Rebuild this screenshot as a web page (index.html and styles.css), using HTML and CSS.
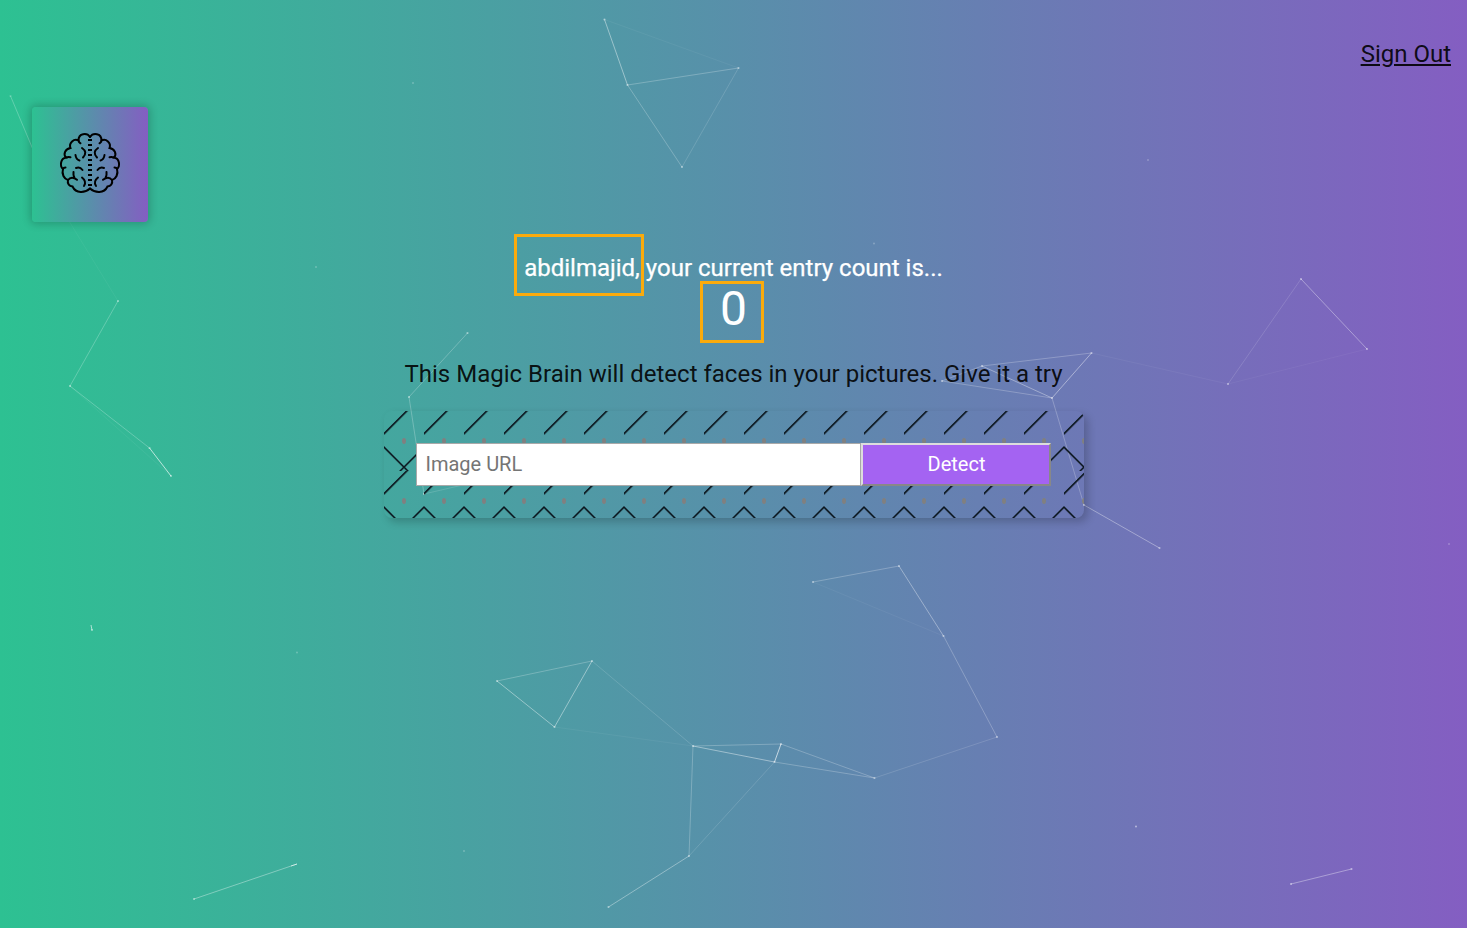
FILE: index.html
```html
<!DOCTYPE html>
<html lang="en">
<head>
<meta charset="utf-8">
<title>Magic Brain</title>
<link rel="stylesheet" href="styles.css">
</head>
<body>
<svg class="particles" viewBox="0 0 1467 928" aria-hidden="true">
  <g class="links">
    <path opacity=".42" d="M604.500 19.500L627.500 85M1052 398L1091.500 353M693 746L774.500 762M497 681L554.500 727L592 661"/>
    <path opacity=".65" d="M781 744L774.500 762M149.500 448L171 476"/>
    <path opacity=".24" d="M627.500 85L738.500 68M627.500 85L682 167M10.500 96L50 190M118 301L70 386L149.500 448M467.500 333L409 397L424 494M1052 398L1084 505M942 381L982 366L1091.500 353M942 381L1052 398M943.500 636L997 737M693 746L781 744L874.500 778L774.500 762M497 681L592 661M693 746L689 856M813 582L899 566"/>
    <path opacity=".36" d="M982 366L1052 398M1301 279L1367 349M899 566L943.500 636"/>
    <path opacity=".14" d="M738.500 68L682 167M1301 279L1228 384M874.500 778L997 737M774.500 762L689 856M592 661L693 746M424 494L467 484"/>
    <path opacity=".05" d="M604.500 19.500L738.500 68M1091.500 353L1228 384L1367 349M813 582L943.500 636M554.500 727L693 746M50 190L118 301M70 386L171 476"/>
    <path opacity=".36" d="M1084 505L1159.500 548M689 856L608.500 907M194 899L297 864M1291 884L1351.500 869"/>
    <path opacity=".6" d="M91 625L92 630M291 866L297 864"/>
  </g>
  <path class="dots" d="M604.500 19.500h0M627.500 85h0M738.500 68h0M682 167h0M118 301h0M70 386h0M149.500 448h0M171 476h0M467.500 333h0M409 397h0M424 494h0M942 381h0M982 366h0M1091.500 353h0M1052 398h0M1084 505h0M1159.500 548h0M1301 279h0M1367 349h0M1228 384h0M813 582h0M899 566h0M943.500 636h0M997 737h0M874.500 778h0M774.500 762h0M781 744h0M693 746h0M689 856h0M608.500 907h0M497 681h0M554.500 727h0M592 661h0M194 899h0M1291 884h0M1351.500 869h0M1136 826.500h0M92 630h0"/>
  <path class="dots faint" d="M10.500 96h0M413 83h0M1148 160h0M316 267h0M297 652.500h0M874 243.500h0M1449 544h0M464 851h0"/>
</svg>
<nav class="nav"><a class="signout">Sign Out</a></nav>
<div class="logo">
  <svg class="brain" viewBox="0 0 60 60" aria-hidden="true">
    <g id="half">
      <path d="M30 4C27-.5 18.500 0 18.500 7.500C14 5 8.500 10 10.500 15C5 16 3 21 6 24.500C.5 25.500-.5 33 3 36C1.500 41 4 46 8 47C7 51 9.500 53 12.500 53.500C16 61 25 60 30 55.500"/>
      <path d="M18.500 7.500Q18.500 9 20.500 10.300M6 24.500Q8 23.700 10.500 24.200M3 36Q3.500 34.500 5.500 34.500M8 47Q11.500 42.500 17 46.800M13.500 39Q13 42 14.500 45M22 15Q28 19 23 24.500M15.500 22Q16 26.500 19.500 27.500M16 35Q20 33.500 22.500 37M22 44.500Q27 48.500 24 53"/>
    </g>
    <use href="#half" transform="matrix(-1 0 0 1 60 0)"/>
    <path class="seam" d="M30 6V55"/>
  </svg>
</div>
<main class="main">
  <div class="greeting"><span class="mark name-mark"></span>abdilmajid, your current entry count is...</div>
  <div class="count"><span class="mark count-mark"></span>0</div>
  <p class="intro">This Magic Brain will detect faces in your pictures. Give it a try</p>
  <form class="form">
    <svg class="pattern" aria-hidden="true">
      <defs>
        <pattern id="tile" width="40" height="60" patternUnits="userSpaceOnUse">
          <path class="shade" d="M0 23.500L24 -.5M0 36.500L24 60.500M40 36.500L16 60.500"/>
          <path class="stroke" d="M-1 23.500L24 -1.500M-1 35L25 61M41 35L15 61"/>
          <ellipse class="drop" cx="20" cy="30" rx="2" ry="3"/>
        </pattern>
      </defs>
      <rect width="100%" height="100%" fill="url(#tile)"/>
    </svg>
    <input class="url" type="text" placeholder="Image URL">
    <button class="detect" type="button">Detect</button>
  </form>
</main>
</body>
</html>
```
FILE: styles.css
```css
* { box-sizing: border-box; }
body {
  margin: 0;
  height: 928px;
  overflow: hidden;
  font-family: Roboto, sans-serif;
  background: linear-gradient(90deg, #2dc192 0%, #845ec2 100%);
}
.particles {
  position: absolute;
  inset: 0;
  width: 1467px;
  height: 928px;
  z-index: -1;
  fill: none;
  stroke: #fff;
}
.links { stroke-width: 1; }
.dots { stroke-width: 2.2; stroke-linecap: round; opacity: .45; }
.faint { opacity: .22; }
.nav { display: flex; justify-content: flex-end; height: 107px; padding: 40px 16px 0; }
.signout { font-size: 24px; line-height: 28px; text-decoration: underline; color: rgba(0, 0, 0, .9); }
.logo {
  display: flex;
  align-items: center;
  justify-content: center;
  width: 116px;
  height: 115px;
  margin-left: 32px;
  padding-bottom: 3px;
  border-radius: 4px;
  background: linear-gradient(90deg, #2dc192 0%, #845ec2 100%);
  box-shadow: 0 0 8px 2px rgba(0, 0, 0, .2);
}
.brain { width: 60px; height: 60px; overflow: visible; fill: none; stroke: #000; stroke-width: 2; stroke-linecap: round; }
.seam { stroke-width: 4; stroke-linecap: butt; stroke-dasharray: 2 3; }
.main { display: flex; flex-direction: column; align-items: center; padding-top: 32px; }
.greeting { position: relative; color: #fff; font-size: 24px; line-height: 28px; white-space: nowrap; -webkit-text-stroke: .25px #fff; }
.count { position: relative; color: #fff; font-size: 48px; line-height: 56px; margin-top: -1px; }
.mark { position: absolute; border: 3px solid #fbab0c; }
.name-mark { left: -10px; top: -20px; width: 130px; height: 62px; }
.count-mark { left: -20px; top: 0; width: 64px; height: 62px; }
.intro { margin: 23px 0 0; font-size: 24px; line-height: 28px; white-space: nowrap; color: rgba(0, 0, 0, .9); }
.form {
  position: relative;
  display: flex;
  width: 700px;
  height: 107px;
  margin: 23px 0 0;
  padding: 32px;
  border-radius: 8px;
  box-shadow: 4px 4px 8px 0 rgba(0, 0, 0, .2);
}
.pattern { position: absolute; inset: 0; width: 100%; height: 100%; border-radius: 8px; }
.stroke { fill: none; stroke: #0b1720; stroke-width: 1.300; }
.shade { fill: none; stroke: #000; stroke-opacity: .4; stroke-width: 1.600; }
.drop { fill: #808080; }
.url, .detect { position: relative; font-family: inherit; font-size: 20px; border-radius: 0; }
.url { width: 445px; padding: 7px 9px 9px; border: 1px solid #a9a9a9; background: #fff; }
.url::placeholder { color: #757575; }
.detect { width: 190px; padding: 0 0 2px 2px; border: 2px solid; border-color: #ddd #888 #888 #ddd; background: #a463f2; color: #fff; }
```
